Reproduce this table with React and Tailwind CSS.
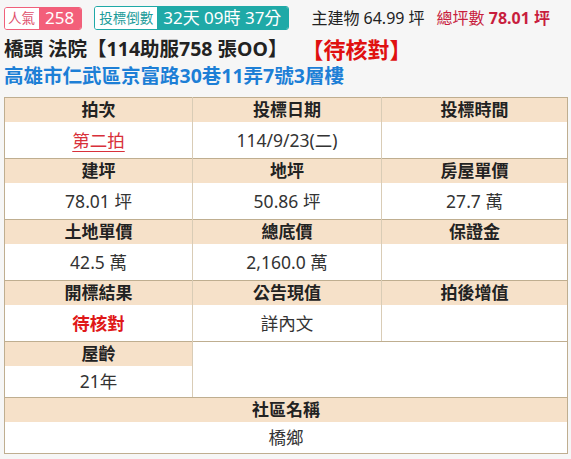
const font = { fontFamily: '"Noto Sans", "Noto Sans CJK TC", sans-serif' };

function Head({ children }) {
  return (
    <div className="h-[25px] flex items-center justify-center bg-[#f6e1c9] border-t border-[#bfae90] text-[17px] font-bold text-[#222]">
      {children}
    </div>
  );
}

function Val({ children, className = "", h = "h-[36px]" }) {
  return (
    <div className={`${h} flex items-center justify-center bg-white text-[17.5px] text-[#333] ${className}`}>
      {children}
    </div>
  );
}

function Cell({ label, value, valueClass = "", last = false }) {
  return (
    <div className={`flex flex-col ${last ? "" : "border-r border-[#d9ccb6]"}`}>
      <Head>{label}</Head>
      <Val className={valueClass}>{value}</Val>
    </div>
  );
}

const rows = [
  [
    { label: "拍次", value: "第二拍", valueClass: "text-[#d8303a] underline underline-offset-4 decoration-1" },
    { label: "投標日期", value: "114/9/23(二)" },
    { label: "投標時間", value: "" },
  ],
  [
    { label: "建坪", value: "78.01 坪" },
    { label: "地坪", value: "50.86 坪" },
    { label: "房屋單價", value: "27.7 萬" },
  ],
  [
    { label: "土地單價", value: "42.5 萬" },
    { label: "總底價", value: "2,160.0 萬" },
    { label: "保證金", value: "" },
  ],
  [
    { label: "開標結果", value: "待核對", valueClass: "text-[#e01818] font-bold" },
    { label: "公告現值", value: "詳內文" },
    { label: "拍後增值", value: "" },
  ],
];

export default function App() {
  return (
    <div className="w-[571px] h-[459px] overflow-hidden bg-[#f6f6f6]" style={font}>
      <div className="flex items-center h-[34px] pl-[4px] pt-[2px] whitespace-nowrap">
        <div className="flex h-[23px] border border-[#f0607a] rounded-[3px] overflow-hidden">
          <span className="bg-white text-[#e0506c] text-[13.5px] pl-[3px] pr-[4px] flex items-center">人氣</span>
          <span className="bg-[#f35f7a] text-white text-[17px] pl-[6px] pr-[7px] flex items-center">258</span>
        </div>
        <div className="flex h-[24px] ml-[12px] border border-[#1fa9a7] rounded-[3px] overflow-hidden">
          <span className="bg-white text-[#1c9c9a] text-[13.5px] px-[4px] flex items-center">投標倒數</span>
          <span className="bg-[#1fa9a7] text-white text-[17px] pl-[6px] pr-[7px] flex items-center">32天 09時 37分</span>
        </div>
        <span className="ml-[22px] text-[16px] text-[#222]">主建物 64.99 坪</span>
        <span className="ml-[12px] text-[16px] text-[#c81e3e]">總坪數 <b>78.01 坪</b></span>
      </div>
      <div className="pl-[4px] h-[30px] flex items-center text-[19.5px] font-bold whitespace-nowrap">
        <span className="text-[#222]">橋頭 法院【114助服758 張OO】</span>
        <span className="ml-[14px] text-[#e01010] text-[22px]">【待核對】</span>
      </div>
      <div className="pl-[4px] h-[24px] flex items-center text-[19.5px] font-bold text-[#1d7fd6] whitespace-nowrap">
        高雄市仁武區京富路30巷11弄7號3層樓
      </div>
      <div className="mt-[9px] ml-[4px] w-[564px] border-l border-r border-b border-[#bfae90]">
        {rows.map((r, i) => (
          <div key={i} className="grid grid-cols-[188px_189px_1fr]">
            {r.map((c, j) => (
              <Cell key={j} {...c} last={j === 2} />
            ))}
          </div>
        ))}
        <div className="grid grid-cols-[188px_1fr]">
          <div className="flex flex-col border-r border-[#d9ccb6]">
            <Head>屋齡</Head>
            <Val h="h-[31px]">21年</Val>
          </div>
          <div className="bg-white border-t border-[#bfae90]" />
        </div>
        <Head>社區名稱</Head>
        <Val h="h-[31px]">橋鄉</Val>
      </div>
    </div>
  );
}
